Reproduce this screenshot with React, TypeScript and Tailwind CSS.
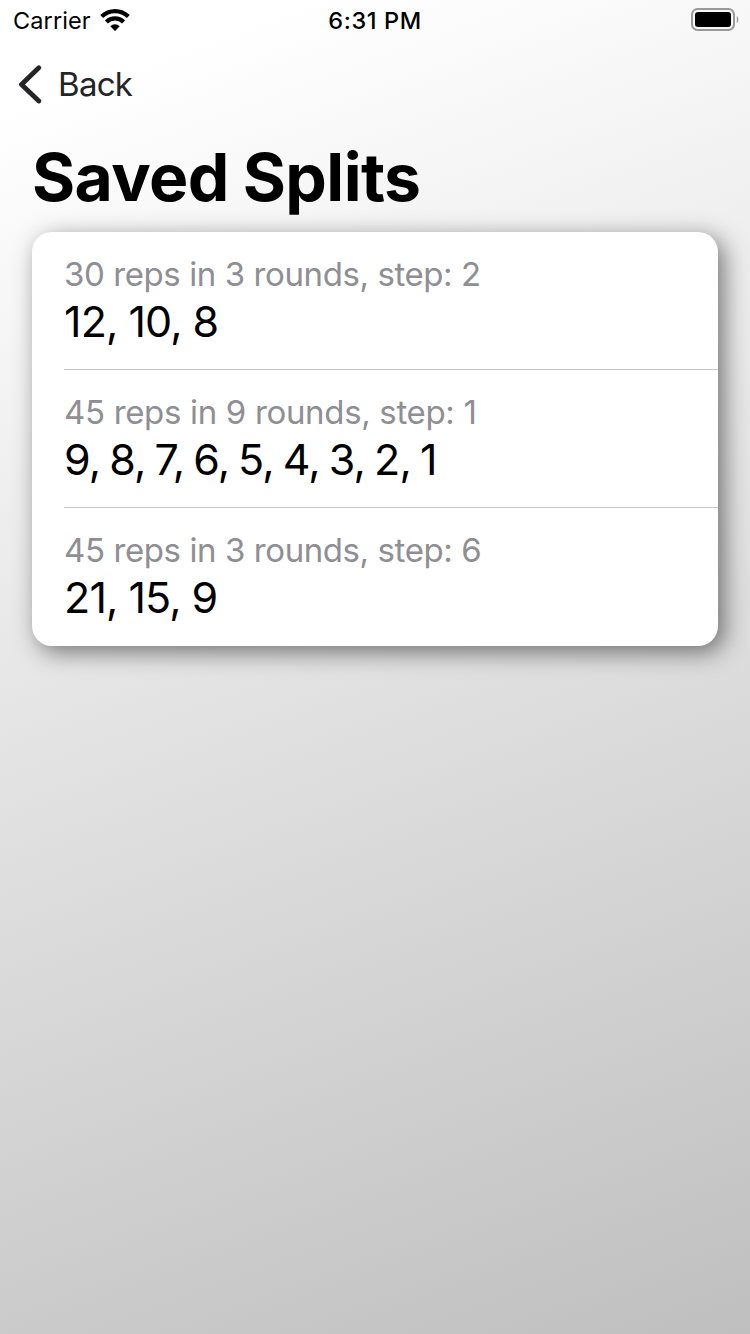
interface Split {
  id: number;
  summary: string;
  reps: string;
}

const splits: Split[] = [
  { id: 1, summary: '30 reps in 3 rounds, step: 2', reps: '12, 10, 8' },
  { id: 2, summary: '45 reps in 9 rounds, step: 1', reps: '9, 8, 7, 6, 5, 4, 3, 2, 1' },
  { id: 3, summary: '45 reps in 3 rounds, step: 6', reps: '21, 15, 9' },
];

function WifiIcon() {
  return (
    <svg className="w-[30px] h-[22px]" viewBox="0 0 30 22" fill="none" stroke="black" strokeWidth={4.2}>
      <path d="M1.7 7.6a19 19 0 0 1 26.6 0" />
      <path d="M6.4 13a12.2 12.2 0 0 1 17.2 0" />
      <path d="M15 22l-4.7-4.7a6.7 6.7 0 0 1 9.4 0z" fill="black" stroke="none" />
    </svg>
  );
}

function BatteryIcon() {
  return (
    <svg className="w-[49px] h-[23px]" viewBox="0 0 49 23">
      <rect x="1" y="1" width="42" height="21" rx="5.5" fill="none" stroke="#999999" strokeWidth={2} />
      <rect x="4" y="4" width="36" height="15" rx="3" fill="black" />
      <path d="M45.8 8c2 1.2 2 6 0 7.2z" fill="#999999" />
    </svg>
  );
}

function StatusBar() {
  return (
    <header className="grid grid-cols-3 items-center h-10 px-[10px] text-black">
      <div className="flex items-center gap-[9px] pl-[3px]">
        <span className="pt-[2px] text-[23.5px] tracking-[0.1px]">Carrier</span>
        <WifiIcon />
      </div>
      <span className="pt-[2px] text-center text-[23.5px] font-medium tracking-[0.6px]">6:31 PM</span>
      <div className="flex justify-end pb-px">
        <BatteryIcon />
      </div>
    </header>
  );
}

export default function App() {
  return (
    <div className="w-[750px] h-[1334px] overflow-hidden bg-[linear-gradient(160deg,#ffffff_7%,#bfbfbf_100%)] font-['Inter','Liberation_Sans',sans-serif]">
      <StatusBar />
      <nav className="flex h-[88px] items-center pl-[18px]">
        <button className="flex items-center gap-[16px] text-[#242426]">
          <svg className="w-6 h-10" viewBox="0 0 24 40" fill="none" stroke="currentColor" strokeWidth={4.8} strokeLinecap="round" strokeLinejoin="round">
            <path d="M20.8 3.8L3.5 20.5L20.8 37" />
          </svg>
          <span className="pt-[2px] text-[33px] tracking-[-0.7px]">Back</span>
        </button>
      </nav>
      <main className="px-8">
        <h1 className="h-[104px] pt-[9px] text-[66px] leading-[80px] font-bold tracking-[-0.6px] text-black [word-spacing:-1px]">Saved Splits</h1>
        <ul className="overflow-hidden rounded-[20px] bg-white shadow-[6px_6px_23px_rgba(0,0,0,0.5)]">
          {splits.map((split) => (
            <li key={split.id} className="group pl-8">
              <div className="h-[138px] border-b border-[#c6c6c8] pt-[22px] group-last:border-b-0">
                <p className="text-[33px] leading-10 tracking-[-0.41px] text-[#8e8e93] group-even:tracking-[-0.33px]">{split.summary}</p>
                <p className="text-[43px] leading-[54px] tracking-[-0.8px] text-black [word-spacing:-0.6px] group-even:[word-spacing:-2.4px]">
                  {split.reps}
                </p>
              </div>
            </li>
          ))}
        </ul>
      </main>
    </div>
  );
}
